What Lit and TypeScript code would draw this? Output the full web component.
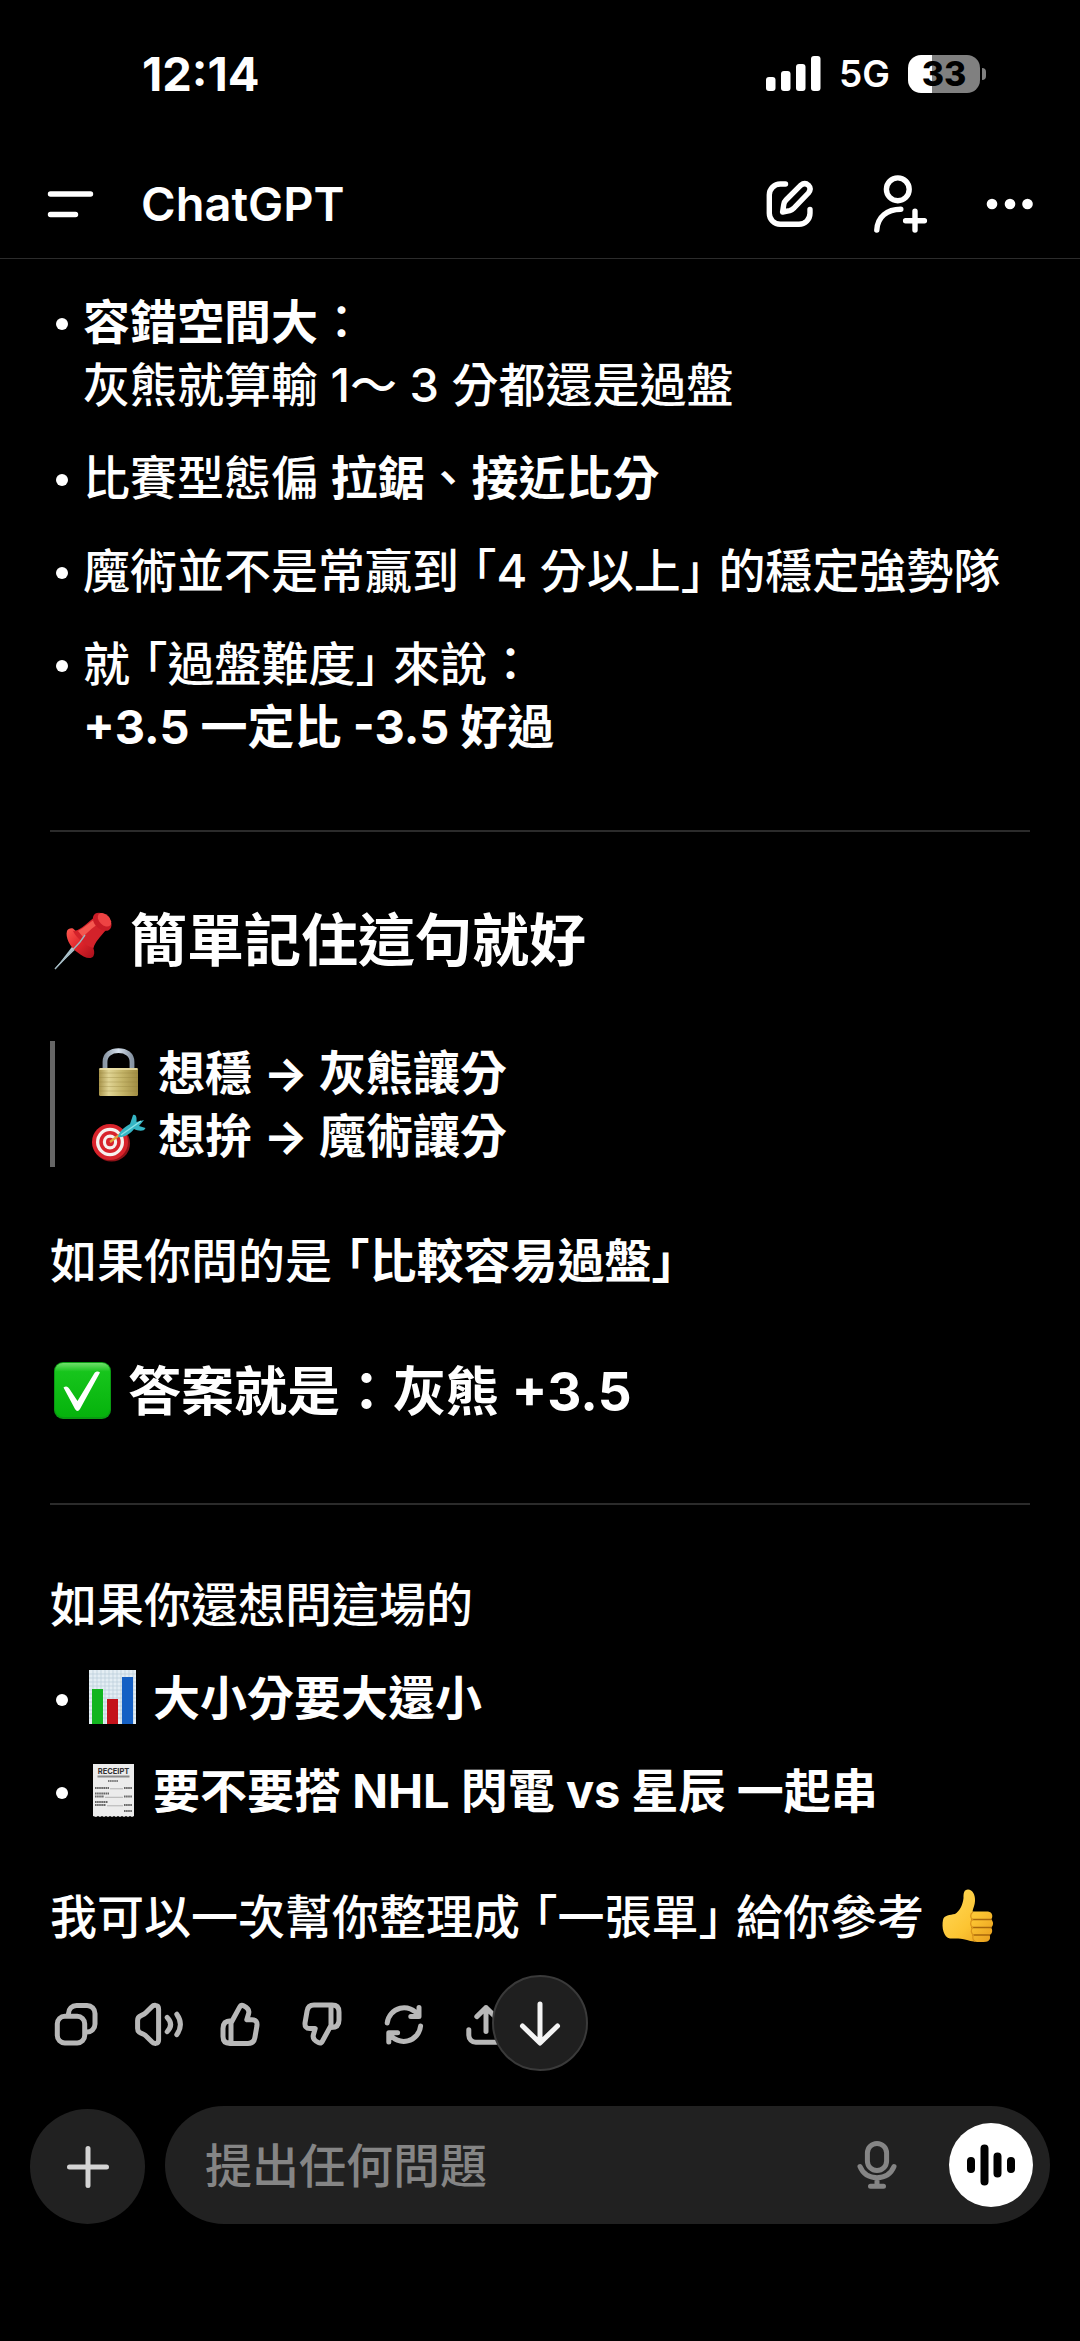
import { LitElement, html, css, svg, TemplateResult } from "lit";
import { customElement } from "lit/decorators.js";

const icons: Record<string, TemplateResult> = {
  menu: svg`<path d="M8.5 18H48.5M8.5 38.5H33.5"/>`,
  compose: svg`<path d="M23.5 8H18.3a11 11 0 0 0-11 11V37.3a11 11 0 0 0 11 11H37a11 11 0 0 0 11-11V33.5"/>
    <path d="M20.6 36L21.8 28.4Q22.2 25.8 24 24L38.6 9.4Q42.8 6 46.4 9.2Q49.8 12.8 46.4 17L32 32Q30.3 33.9 27.8 34.6Z"/>`,
  invite: svg`<circle cx="25.8" cy="13.3" r="11.4"/><path d="M4.8 54C5.4 41 15 33.3 28.8 33.3M33.6 44.7H52.4M43 35.3V54"/>`,
  more: svg`<g fill="currentColor" stroke="none"><circle cx="10" cy="28" r="5.3"/><circle cx="28" cy="28" r="5.3"/><circle cx="45.5" cy="28" r="5.3"/></g>`,
  copy: svg`<rect x="5.3" y="16.3" width="27.4" height="26.6" rx="7.5"/><path d="M16.5 15.5V13.5a8 8 0 0 1 8-8H35a8 8 0 0 1 8 8V24a8 8 0 0 1-8 8H33.5"/>`,
  speak: svg`<path d="M3.6 20.5Q3.6 17 7 15.6Q11 14 13 11.6L17.6 6.9Q19.4 5 21.8 5.4Q24.6 5.8 24.6 9V40Q24.6 43 21.8 43.4Q19.4 43.6 17.6 41.6L13 37Q11 34.6 7 33.2Q3.6 31.8 3.6 28.4Z"/>
    <path d="M33.2 17.4Q40 24.4 33.2 31.6M42.8 14.2Q50 24.4 42.8 34.6"/>`,
  like: svg`<path d="M15 23L23.5 7.4Q25 4.6 27.6 5.8Q34 8.8 32.6 13.7L30.8 19.8H36Q41.8 19.8 40.9 26L38.9 37.5Q38 43.4 32 43.4H14Q7 43.4 7 36.5V28.5Q7 20.8 15 20.8V43"/>`,
  dislike: svg`<path transform="rotate(180 24 24.2)" d="M15 23L23.5 7.4Q25 4.6 27.6 5.8Q34 8.8 32.6 13.7L30.8 19.8H36Q41.8 19.8 40.9 26L38.9 37.5Q38 43.4 32 43.4H14Q7 43.4 7 36.5V28.5Q7 20.8 15 20.8V43"/>`,
  retry: svg`<path d="M7.2 23A17 17 0 0 1 38.4 15.6M39 7.6V16.6H30.8M40.6 26A17 17 0 0 1 9.4 33.6M8.8 42V32.8H17.6"/>`,
  share: svg`<path d="M6.8 29.8V35.3a7 7 0 0 0 7 7H34.2a7 7 0 0 0 7-7V29.8M24 31.4V7.6M14.8 16.6L24 7.6L33.2 16.6"/>`,
  down: svg`<path d="M24 5V43.5M6.5 27L24 44L41.5 27"/>`,
  plus: svg`<path d="M24 5.5V42.5M5.5 24H42.5"/>`,
  mic: svg`<rect x="14.4" y="2.5" width="19.2" height="27" rx="9.6"/><path d="M7 25.5Q11.5 36.5 24 36.7Q36.5 36.5 41 25.5M24 37V44M17.5 45.2H30.5"/>`,
  voice: svg`<path d="M4 20V28M17.5 7.5V40.5M30.5 15.5V32.5M44 20V28"/>`,
};

const emoji: Record<string, TemplateResult> = {
  pin: svg`<defs>
      <linearGradient id="pinRed" x1="0" y1="0" x2="1" y2="1"><stop offset="0" stop-color="#ff5a50"/><stop offset=".5" stop-color="#e0252b"/><stop offset="1" stop-color="#a80f1b"/></linearGradient>
    </defs>
    <path d="M5 60L28 30L32 34Z" fill="#a9c3cc"/><path d="M5 60L30 32" stroke="#e8f3f5" stroke-width="1"/>
    <path d="M17 22C15 28 20 38 27 43C34 49 41 51 43.500 47C45 44 44 40 42.500 37L23 19.500C20 19 18 20 17 22Z" fill="url(#pinRed)"/>
    <path d="M23 22C29 22 35 16 43.500 9L56 21C50 28 45 33 43.500 39C36 37 27 30 23 22Z" fill="#d3222a"/>
    <path d="M28 22C34 19 40 13 45 10L49 14C42 19 36 25 33 28Z" fill="#f4574f"/>
    <path d="M43 8C44 3 51 2 57 7C62 12 63 18 59 21C55 23.500 49 20 46 17C43.500 14 42.500 11 43 8Z" fill="#c91c26"/>
    <ellipse cx="54.500" cy="10.800" rx="8" ry="5.200" transform="rotate(45 54.500 10.800)" fill="#ee4343"/>
    <path d="M5 60L30 33L35 26" stroke="#9fb6bf" stroke-width="1.400" fill="none"/>`,
  lock: svg`<defs>
      <linearGradient id="lockGold" x1="0" y1="0" x2="1" y2="0"><stop offset="0" stop-color="#a8944a"/><stop offset=".25" stop-color="#e0d494"/><stop offset=".6" stop-color="#c4b468"/><stop offset="1" stop-color="#a08c42"/></linearGradient>
      <linearGradient id="lockSteel" x1="0" y1="0" x2="1" y2="0"><stop offset="0" stop-color="#8b98a6"/><stop offset=".5" stop-color="#d5e0ec"/><stop offset="1" stop-color="#8794a3"/></linearGradient>
    </defs>
    <path d="M17 26V17C17 9.500 23 5.600 30.500 5.600S44 9.500 44 17V26" fill="none" stroke="url(#lockSteel)" stroke-width="4.800"/>
    <rect x="11" y="23" width="39" height="28" rx="1.500" fill="url(#lockGold)"/>
    <path d="M11 28H50M11 32.500H50M11 37H50M11 41.500H50M11 46H50" stroke="#8f7d38" stroke-width="1" opacity=".3"/>
    <path d="M11.500 24H49.500" stroke="#f0e6b0" stroke-width="1.500"/>`,
  target: svg`<ellipse cx="23.500" cy="35.500" rx="18.500" ry="18" fill="#8f1218"/>
    <ellipse cx="22" cy="34" rx="18" ry="18" fill="#d8232b"/>
    <ellipse cx="22" cy="34" rx="14" ry="14.300" fill="#f6f1ee"/>
    <ellipse cx="22" cy="34" rx="10.700" ry="11" fill="#d8232b"/>
    <ellipse cx="22" cy="34" rx="7.200" ry="7.400" fill="#f6f1ee"/>
    <ellipse cx="22" cy="34" rx="4" ry="4.200" fill="#d8232b"/>
    <path d="M22 34L34 25" stroke="#e2a33a" stroke-width="2.200"/>
    <path d="M30 29C31 24 35 20 42 16L45 7C48 6 49 9 48.500 14L56 12L51 18L57.500 20C56 24 50 23 46 21C42 26 36 30 30 29Z" fill="#35b5c4"/>
    <path d="M33 27L53 13" stroke="#8be3e8" stroke-width="1.500"/>`,
  check: svg`<defs>
      <linearGradient id="okGreen" x1="0" y1="0" x2="0" y2="1"><stop offset="0" stop-color="#6fe06a"/><stop offset=".16" stop-color="#17c51c"/><stop offset="1" stop-color="#05b30c"/></linearGradient>
    </defs>
    <rect x="4" y="2" width="57" height="57" rx="9" fill="#0a9a12"/>
    <rect x="5" y="3" width="55" height="54" rx="8" fill="url(#okGreen)"/>
    <path d="M13.500 27.500C16 25.500 18 26.500 19.500 29L27.500 41L44.500 13C46 11 48.500 11 50 12.500L30 49C28.500 51.500 26.500 51.500 25 49Z" fill="#fff"/>`,
  chart: svg`<rect x="6" y="0" width="47" height="54" fill="#e4eef4"/>
    <path d="M10 0V54M14 0V54M18 0V54M22 0V54M26 0V54M30 0V54M34 0V54M38 0V54M42 0V54M46 0V54M50 0V54M6 4H53M6 8H53M6 12H53M6 16H53M6 20H53M6 24H53M6 28H53M6 32H53M6 36H53M6 40H53M6 44H53M6 48H53" stroke="#b9cbd8" stroke-width=".7"/>
    <rect x="9" y="19" width="11" height="35" fill="#12b51f"/><rect x="24" y="29" width="11" height="25" fill="#c4121a"/><rect x="39" y="7" width="11" height="47" fill="#1560c4"/>`,
  receipt: svg`<path d="M10 1H51V53L49 54L47 53L45 54L43 53L41 54L39 53L37 54L35 53L33 54L31 53L29 54L27 53L25 54L23 53L21 54L19 53L17 54L15 53L13 54L10 53Z" fill="#ececec"/>
    <text x="30.500" y="11.200" text-anchor="middle" font-size="7.500" font-weight="700" fill="#333">RECEIPT</text>
    <rect x="14.500" y="12.500" width="32" height="2" fill="#8a8a8a"/>
    <path d="M25 18H35" stroke="#777" stroke-width="2" stroke-dasharray="1.500 .6"/>
    <path d="M12 25H26M12 30.500H26M12 33.500H21M12 39H25M12 42H23M41 25H49M41 33.500H49M41 42H49M41 48H49" stroke="#666" stroke-width="1.800" stroke-dasharray="1.600 .5"/>
    <path d="M27 25.800H40M22 34.300H40M24 42.800H40" stroke="#999" stroke-width=".7"/>`,
  thumb: svg`<defs>
      <linearGradient id="skin" x1="0" y1="0" x2="1" y2="1"><stop offset="0" stop-color="#ffdc5e"/><stop offset=".6" stop-color="#fcc432"/><stop offset="1" stop-color="#e79c1c"/></linearGradient>
    </defs>
    <path d="M5 31C6 26 12 26 17 25C22 22 25 15 25.500 9C25.500 4 26 0.500 30 0.500C34.500 0.500 37.500 6 37 12C37 16 35 19 34.500 22.500H50C54.500 23 55.500 28 53 30.500C56 32.500 55.500 37 53 38.500C55 41 54.500 45 51.500 46C53 49 51.500 52.500 48 52.800C42 53.500 35 53 29 51C22 49 18 49.500 12 49.500C5.500 48.500 3.500 38 5 31Z" fill="url(#skin)"/>
    <path d="M34 30.600H53M34 38.600H53M35 46H51.500" stroke="#a9680c" stroke-width="1.500" stroke-linecap="round"/>
    <path d="M35 23C31.500 25 32.500 29 34.500 30.600C31.500 33 32.500 37 34.500 38.600C32.500 41 33 44.500 35.500 46C34 48.500 35 51.500 37 52" fill="none" stroke="#dc951c" stroke-width="1.300"/>`,
};

const icon = (name: string, size: number) => html`
  <svg class="icon" viewBox="0 0 ${size} ${size}" width=${size} height=${size} aria-hidden="true">${icons[name]}</svg>`;

const pic = (name: string, label: string, size = 56) => html`
  <svg class="pic" viewBox="0 0 ${size} ${size}" width=${size} height=${size} role="img" aria-label=${label}>${emoji[name]}</svg>`;

const actions: [string, string][] = [
  ["copy", "複製"],
  ["speak", "朗讀"],
  ["like", "讚"],
  ["dislike", "倒讚"],
  ["retry", "重新產生"],
  ["share", "分享"],
];

@customElement("app-root")
export class AppRoot extends LitElement {
  static styles = css`
    :host {
      display: flex;
      flex-direction: column;
      min-height: 100vh;
      background: #000;
      color: #fff;
      font: 500 47px/63px Inter, "Noto Sans CJK TC", sans-serif;
    }
    * { box-sizing: border-box; margin: 0; }
    button {
      display: flex;
      align-items: center;
      justify-content: center;
      flex: none;
      padding: 0;
      border: 0;
      background: none;
      color: inherit;
      font: inherit;
    }
    svg { display: block; flex: none; overflow: visible; }
    .icon { fill: none; stroke: currentColor; stroke-width: 5; stroke-linecap: round; stroke-linejoin: round; }
    strong { font-weight: 700; }

    .status {
      display: flex;
      align-items: center;
      justify-content: space-between;
      padding: 44px 94px 45px 142px;
      line-height: 60px;
    }
    .time { font-weight: 700; }
    .radio { display: flex; align-items: center; gap: 18px; font-size: 37px; font-weight: 600; }
    .battery { display: flex; align-items: center; gap: 2px; }
    .level {
      width: 72px;
      border-radius: 13px;
      background: linear-gradient(to right, #fff 33%, #808080 33%);
      color: #000;
      font-size: 34px;
      font-weight: 800;
      line-height: 38px;
      text-align: center;
    }
    .nub { width: 4px; height: 12px; border-radius: 0 4px 4px 0; background: #808080; }

    .bar {
      display: flex;
      align-items: center;
      gap: 54px;
      padding: 23px 42px;
      border-bottom: 1px solid #2c2c2c;
    }
    .bar .icon { stroke-width: 5.4; }
    .bar h1 { flex: 1; margin-left: -11px; font-size: 47px; font-weight: 600; }

    .chat { padding: 31px 50px 0; }
    ul { display: flex; flex-direction: column; gap: 30px; padding: 0; list-style: none; }
    li { display: flex; gap: 15px; padding-left: 6px; }
    .dot { flex: none; width: 12px; height: 12px; margin: 28px 0 0; border-radius: 50%; background: #fff; }
    .row { display: flex; align-items: center; gap: 14px; }
    .quote { margin-inline: 14px; font-feature-settings: "halt"; }
    hr { height: 2px; margin: 72px 0 68px; border: 0; background: #2b2b2b; }
    h2 { margin-top: 71px; font-size: 57px; font-weight: 700; line-height: 76px; }
    h2.row { gap: 16px; }
    h3 { margin: 65px 0 76px; font-size: 53px; font-weight: 700; line-height: 70px; }
    blockquote { margin: 62px 0; padding-left: 33px; border-left: 5px solid #666; font-weight: 700; }
    .offer { margin: 68px 0 30px; }
    .closing { margin-top: 63px; }

    .actions { display: flex; gap: 34px; padding: 52px 2px 0; color: #b8b8b8; }

    .dock { position: relative; display: flex; align-items: flex-end; gap: 20px; padding: 58px 30px 0; }
    .jump {
      position: absolute;
      left: 50%;
      top: -73px;
      width: 96px;
      height: 96px;
      margin-left: -48px;
      border: 2px solid #3a3a3a;
      border-radius: 50%;
      background: #1f1f1f;
      color: #f4f4f4;
    }
    .add { width: 115px; height: 115px; border-radius: 50%; background: #212121; color: #d4d4d4; }
    .field {
      display: flex;
      align-items: center;
      flex: 1;
      gap: 48px;
      min-width: 0;
      padding: 17px 17px 17px 40px;
      border-radius: 59px;
      background: #212121;
      color: #858585;
    }
    input {
      flex: 1;
      min-width: 0;
      padding: 0;
      border: 0;
      outline: 0;
      background: none;
      color: #fff;
      font: inherit;
    }
    input::placeholder { color: #858585; opacity: 1; }
    .talk { width: 84px; height: 84px; border-radius: 50%; background: #fff; color: #000; }
    .talk .icon { stroke-width: 8; }
  `;

  render() {
    return html`
      <div class="status">
        <span class="time">12:14</span>
        <div class="radio">
          <svg width="55" height="36" viewBox="0 0 55 36" fill="#fff" role="img" aria-label="訊號">
            <rect x="0" y="21" width="9.500" height="14" rx="3" /><rect x="15" y="15" width="9.500" height="20" rx="3" />
            <rect x="30" y="8" width="9.500" height="27" rx="3" /><rect x="45" y="0" width="9.500" height="35" rx="3" />
          </svg>
          <span>5G</span>
          <div class="battery"><div class="level">33</div><div class="nub"></div></div>
        </div>
      </div>

      <header class="bar">
        <button aria-label="選單">${icon("menu", 56)}</button>
        <h1>ChatGPT</h1>
        <button aria-label="新對話">${icon("compose", 56)}</button>
        <button aria-label="邀請">${icon("invite", 56)}</button>
        <button aria-label="更多">${icon("more", 56)}</button>
      </header>

      <main class="chat">
        <ul>
          <li><span class="dot"></span><div><strong>容錯空間大</strong>：<br />灰熊就算輸 1～ 3 分都還是過盤</div></li>
          <li><span class="dot"></span><div>比賽型態偏 <strong>拉鋸</strong>、<strong>接近比分</strong></div></li>
          <li><span class="dot"></span><div>魔術並不是常贏到<span class="quote">「4 分以上」</span>的穩定強勢隊</div></li>
          <li><span class="dot"></span><div>就<span class="quote">「過盤難度」</span>來說：<br /><strong>+3.5 一定比 -3.5 好過</strong></div></li>
        </ul>
        <hr />
        <h2 class="row">${pic("pin", "圖釘", 64)}<span>簡單記住這句就好</span></h2>
        <blockquote>
          <div class="row">${pic("lock", "鎖")}<span>想穩 → 灰熊讓分</span></div>
          <div class="row">${pic("target", "靶心")}<span>想拚 → 魔術讓分</span></div>
        </blockquote>
        <p>如果你問的是<strong class="quote">「比較容易過盤」</strong></p>
        <h3 class="row">${pic("check", "打勾", 64)}<span>答案就是：灰熊 +3.5</span></h3>
        <hr />
        <p class="offer">如果你還想問這場的</p>
        <ul>
          <li><span class="dot"></span><strong class="row">${pic("chart", "長條圖")}<span>大小分要大還小</span></strong></li>
          <li><span class="dot"></span><strong class="row">${pic("receipt", "收據")}<span>要不要搭 NHL 閃電 vs 星辰 一起串</span></strong></li>
        </ul>
        <p class="row closing"><span>我可以一次幫你整理成<span class="quote">「一張單」</span>給你參考</span>${pic("thumb", "讚")}</p>
        <div class="actions">
          ${actions.map(([name, label]) => html`<button aria-label=${label}>${icon(name, 48)}</button>`)}
        </div>
      </main>

      <footer class="dock">
        <button class="jump" aria-label="捲到底部">${icon("down", 48)}</button>
        <button class="add" aria-label="新增附件">${icon("plus", 48)}</button>
        <div class="field">
          <input type="text" placeholder="提出任何問題" aria-label="提出任何問題" />
          <button aria-label="語音輸入">${icon("mic", 48)}</button>
          <button class="talk" aria-label="語音模式">${icon("voice", 48)}</button>
        </div>
      </footer>
    `;
  }
}
